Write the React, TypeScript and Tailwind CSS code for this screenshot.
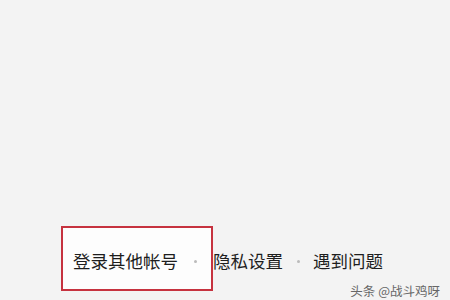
export default function App() {
  return (
    <div
      className="relative w-[450px] h-[300px] overflow-hidden bg-[#f3f3f3]"
      style={{ fontFamily: '"Noto Sans CJK SC", "Noto Sans", sans-serif' }}
    >
      {/* annotation box */}
      <div className="absolute left-[61px] top-[226px] w-[152px] h-[65px] border-[2.5px] border-[#c6323f] bg-[#fdfdfd]" />

      <div className="absolute left-[73px] top-[248px] flex items-center text-[17.5px] leading-[26px] text-[#1e1e1e]">
        <span>登录其他帐号</span>
        <span className="mx-[16px] w-[3px] h-[3px] rounded-full bg-[#bbb]" />
        <span>隐私设置</span>
        <span className="ml-[14px] mr-[13px] w-[3px] h-[3px] rounded-full bg-[#bbb]" />
        <span>遇到问题</span>
      </div>

      <div className="absolute right-[10px] top-[283px] text-[12.5px] leading-[16px] text-[#666]">
        头条 @战斗鸡呀
      </div>
    </div>
  );
}
